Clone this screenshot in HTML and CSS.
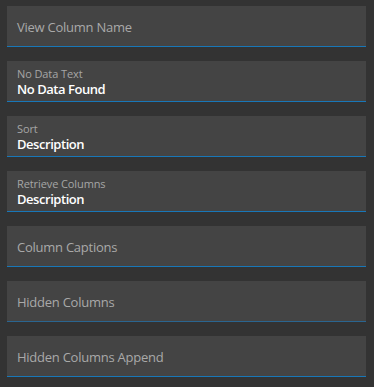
FILE: index.html
```html
<!DOCTYPE html>
<html lang="en">
<head>
  <meta charset="UTF-8" />
  <title>Column Settings</title>
  <link rel="stylesheet" href="styles.css">
</head>
<body>
  <div class="form">
    <div class="field">
      <span class="placeholder">View Column Name</span>
    </div>
    <div class="field filled">
      <span class="label">No Data Text</span>
      <span class="value">No Data Found</span>
    </div>
    <div class="field filled">
      <span class="label">Sort</span>
      <span class="value">Description</span>
    </div>
    <div class="field filled">
      <span class="label">Retrieve Columns</span>
      <span class="value">Description</span>
    </div>
    <div class="field">
      <span class="placeholder">Column Captions</span>
    </div>
    <div class="field dim">
      <span class="placeholder">Hidden Columns</span>
    </div>
    <div class="field">
      <span class="placeholder">Hidden Columns Append</span>
    </div>
  </div>
</body>
</html>
```

FILE: styles.css
```css
* {
  box-sizing: border-box;
  margin: 0;
  padding: 0;
}

body {
  font-family: 'Open Sans', sans-serif;
  background-color: #333333;
  width: 374px;
  height: 387px;
  overflow: hidden;
}

.form {
  display: flex;
  flex-direction: column;
  gap: 14px;
  padding: 6px 8px 0 7px;
}

.field {
  display: flex;
  flex-direction: column;
  height: 41px;
  padding: 13px 10px 0;
  background-color: #444444;
  border-bottom: 1px solid #1877b8;
}

.field.dim {
  border-bottom-color: #2a6590;
}

.field.filled {
  padding-top: 6px;
}

.placeholder {
  font-size: 13px;
  line-height: 17px;
  letter-spacing: -0.25px;
  color: #a9a9a9;
}

.label {
  font-size: 11px;
  line-height: 14px;
  letter-spacing: -0.1px;
  color: #a6a6a6;
}

.value {
  font-size: 13px;
  line-height: 17px;
  font-weight: 600;
  letter-spacing: -0.45px;
  color: #ffffff;
}
```
